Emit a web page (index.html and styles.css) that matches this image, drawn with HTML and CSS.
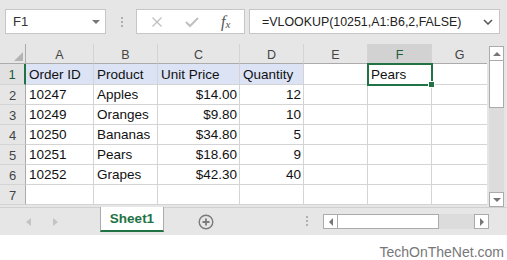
FILE: index.html
```html
<!DOCTYPE html>
<html lang="en">
<head>
  <meta charset="UTF-8"/>
  <title>VLOOKUP – Sheet1</title>
  <link rel="stylesheet" href="styles.css">
</head>
<body>
  <div class="app">
    <div class="toolbar">
      <div class="namebox">
        <span>F1</span>
        <span class="caret"></span>
      </div>
      <div class="vdots"><i></i><i></i><i></i></div>
      <div class="fxbox">
        <svg width="12" height="12" viewBox="0 0 12 12"><path d="M1.5 1.5 L10.5 10.5 M10.5 1.5 L1.5 10.5" stroke="#c0c0c0" stroke-width="1.3" fill="none"/></svg>
        <svg width="14" height="12" viewBox="0 0 14 12"><path d="M1 6 L5 10 L13 2" stroke="#c0c0c0" stroke-width="2" fill="none"/></svg>
        <span class="fx">f<sub>x</sub></span>
      </div>
      <div class="formula">
        <span>=VLOOKUP(10251,A1:B6,2,FALSE)</span>
        <svg width="10" height="6" viewBox="0 0 10 6"><path d="M1 1 L5 5 L9 1" stroke="#555" stroke-width="1.5" fill="none"/></svg>
      </div>
    </div>

    <div class="sheet">
      <div class="grid">
        <div class="hd corner"><span class="tri"></span></div>
        <div class="hd col">A</div>
        <div class="hd col">B</div>
        <div class="hd col">C</div>
        <div class="hd col">D</div>
        <div class="hd col">E</div>
        <div class="hd col sel">F</div>
        <div class="hd col last">G</div>

        <div class="hd row first-row">1</div>
        <div class="c fill first">Order ID</div>
        <div class="c fill first">Product</div>
        <div class="c fill first">Unit Price</div>
        <div class="c fill first">Quantity</div>
        <div class="c first"></div>
        <div class="c first active">Pears<span class="handle"></span></div>
        <div class="c first last"></div>

        <div class="hd row">2</div>
        <div class="c">10247</div><div class="c">Apples</div><div class="c num">$14.00</div><div class="c num">12</div><div class="c"></div><div class="c"></div><div class="c last"></div>

        <div class="hd row">3</div>
        <div class="c">10249</div><div class="c">Oranges</div><div class="c num">$9.80</div><div class="c num">10</div><div class="c"></div><div class="c"></div><div class="c last"></div>

        <div class="hd row">4</div>
        <div class="c">10250</div><div class="c">Bananas</div><div class="c num">$34.80</div><div class="c num">5</div><div class="c"></div><div class="c"></div><div class="c last"></div>

        <div class="hd row">5</div>
        <div class="c">10251</div><div class="c">Pears</div><div class="c num">$18.60</div><div class="c num">9</div><div class="c"></div><div class="c"></div><div class="c last"></div>

        <div class="hd row">6</div>
        <div class="c">10252</div><div class="c">Grapes</div><div class="c num">$42.30</div><div class="c num">40</div><div class="c"></div><div class="c"></div><div class="c last"></div>

        <div class="hd row">7</div>
        <div class="c"></div><div class="c"></div><div class="c"></div><div class="c"></div><div class="c"></div><div class="c"></div><div class="c last"></div>
      </div>

      <div class="vscroll">
        <div class="sbtn"><span class="up"></span></div>
        <div class="vthumb"></div>
        <div class="vtrack"></div>
        <div class="sbtn"><span class="down"></span></div>
      </div>
    </div>

    <div class="tabbar">
      <div class="tabnav">
        <span class="left"></span>
        <span class="right"></span>
      </div>
      <div class="tab">Sheet1</div>
      <div class="addsheet">
        <svg width="16" height="16" viewBox="0 0 16 16"><circle cx="8" cy="8" r="6.8" stroke="#7a7a7a" stroke-width="1.4" fill="none"/><path d="M8 4.5 V11.5 M4.5 8 H11.5" stroke="#7a7a7a" stroke-width="1.8"/></svg>
      </div>
      <div class="vdots small"><i></i><i></i><i></i></div>
      <div class="hscroll">
        <div class="sbtn"><span class="left"></span></div>
        <div class="hthumb"></div>
        <div class="htrack"></div>
        <div class="sbtn"><span class="right"></span></div>
      </div>
    </div>

    <div class="footer">TechOnTheNet.com</div>
  </div>
</body>
</html>
```

FILE: styles.css
```css
body { margin: 0; font-family: "Liberation Sans", Arial, sans-serif; background: #fff; }
.app { width: 507px; height: 260px; overflow: hidden; }

/* formula bar */
.toolbar {
  height: 44px; background: #e6e6e6;
  display: flex; align-items: flex-start;
  padding: 9px 0 0 5px; box-sizing: border-box;
}
.namebox {
  width: 101px; height: 25px; box-sizing: border-box;
  background: #fff; border: 1px solid #c6c6c6;
  display: flex; align-items: center; justify-content: space-between;
  padding: 0 5px 0 7px; font-size: 13px; color: #333;
}
.caret {
  width: 0; height: 0;
  border-left: 4px solid transparent; border-right: 4px solid transparent;
  border-top: 4px solid #777;
}
.vdots { display: flex; flex-direction: column; gap: 2px; margin: 8px 13px 0 15px; }
.vdots i { width: 2px; height: 2px; background: #b0b0b0; display: block; }
.fxbox {
  width: 109px; height: 25px; box-sizing: border-box;
  background: #fff; border: 1px solid #c6c6c6;
  display: flex; align-items: center; gap: 22px; padding-left: 14px;
}
.fx { font-family: "Liberation Serif", serif; font-style: italic; font-size: 16px; color: #555; line-height: 1; }
.fx sub { font-size: 11px; vertical-align: -1px; }
.formula {
  width: 251px; height: 25px; box-sizing: border-box; margin-left: 4px;
  background: #fff; border: 1px solid #c6c6c6;
  display: flex; align-items: center; justify-content: space-between;
  padding: 0 6px 0 12px; font-size: 12.4px; color: #222;
}

/* sheet */
.sheet { display: flex; background: #e6e6e6; height: 163px; }
.grid {
  display: grid;
  grid-template-columns: 26px 68px 64px 82px 64px 64px 64px 55px;
  grid-template-rows: 20px 21px repeat(6, 20px);
  height: 161px; overflow: hidden; background: #fff;
}
.hd {
  background: #e6e6e6; color: #444; box-sizing: border-box;
  display: flex; align-items: center; justify-content: center;
}
.col {
  font-size: 12.5px; border-bottom: 1px solid #ababab;
  border-right: 1px solid #d4d4d4; padding-top: 3px;
}
.col.last { border-right: none; }
.col.sel { background: #d2d2d2; color: #1e5c3a; }
.corner {
  border-bottom: 1px solid #ababab; border-right: 1px solid #ababab;
  justify-content: flex-end; align-items: flex-end; padding: 0 2px 2px 0;
}
.tri {
  width: 0; height: 0;
  border-left: 9px solid transparent; border-bottom: 9px solid #b4b4b4;
}
.row {
  font-size: 13px; border-right: 1px solid #ababab; border-bottom: 1px solid #d4d4d4;
  padding-top: 1px;
}
.row.first-row { background: #e1e1e1; border-right: 2px solid #217346; color: #1e5c3a; }
.c {
  box-sizing: border-box; border-right: 1px solid #d4d4d4; border-bottom: 1px solid #d4d4d4;
  font-size: 13.5px; color: #111; padding: 2px 0 0 3px; white-space: nowrap;
  position: relative;
}
.c.first { padding-top: 3px; }
.c.fill { background: #dce3f5; }
.c.num { text-align: right; padding: 2px 2px 0 0; }
.c.last { border-right: none; }
.c.active { outline: 2px solid #217346; outline-offset: -1px; z-index: 1; }
.handle {
  position: absolute; right: -4px; bottom: -4px;
  width: 5px; height: 5px; background: #217346; border: 1px solid #fff;
}

.vscroll {
  width: 15px; margin: 2px 0 0 2px; display: flex; flex-direction: column;
  height: 161px;
}
.sbtn {
  background: #fff; border: 1px solid #ababab; box-sizing: border-box;
  display: flex; align-items: center; justify-content: center;
}
.vscroll .sbtn { height: 15px; }
.vthumb { height: 46px; background: #fff; border: 1px solid #ababab; border-top: none; }
.vtrack { flex: 1; background: #dcdcdc; }
.up { width: 0; height: 0; border-left: 4px solid transparent; border-right: 4px solid transparent; border-bottom: 4px solid #777; }
.down { width: 0; height: 0; border-left: 4px solid transparent; border-right: 4px solid transparent; border-top: 4px solid #777; }

/* tabs */
.tabbar {
  height: 28px; background: #e6e6e6; border-top: 1px solid #d0d0d0;
  display: flex; align-items: flex-start; box-sizing: border-box;
}
.tabnav { width: 100px; display: flex; gap: 22px; padding: 10px 0 0 26px; box-sizing: border-box; }
.tabnav span, .hscroll .left, .hscroll .right { width: 0; height: 0; border-top: 4px solid transparent; border-bottom: 4px solid transparent; }
.tabnav .left { border-right: 5px solid #c4c4c4; }
.tabnav .right { border-left: 5px solid #c4c4c4; }
.tab {
  width: 64px; height: 25px; box-sizing: border-box; margin-top: -1px;
  background: #fff; border-left: 1px solid #ababab; border-right: 1px solid #ababab;
  border-bottom: 2px solid #217346;
  color: #217346; font-weight: bold; font-size: 13.5px;
  display: flex; align-items: center; justify-content: center;
}
.addsheet { margin: 6px 0 0 34px; height: 16px; }
.vdots.small { margin: 8px 0 0 92px; }
.hscroll { display: flex; margin: 6px 0 0 15px; height: 15px; }
.hscroll .sbtn { width: 15px; }
.hscroll .left { border-right: 4px solid #777; }
.hscroll .right { border-left: 4px solid #777; }
.hthumb { width: 100px; background: #fff; border: 1px solid #ababab; border-left: none; }
.htrack { width: 35px; background: #dcdcdc; }

.footer {
  text-align: right; padding: 9px 3px 0 0; font-size: 14px; color: #777;
}
```
